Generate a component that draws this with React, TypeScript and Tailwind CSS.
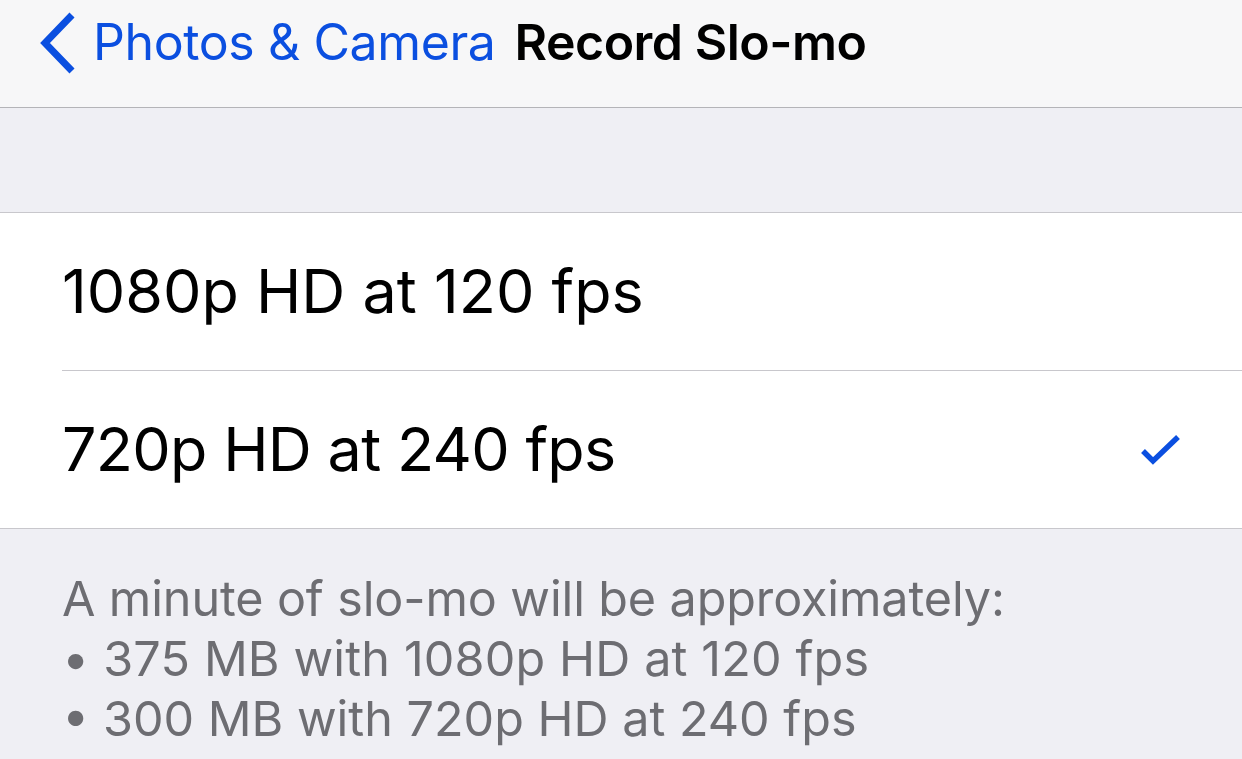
import React from "react";

export default function App() {
  const font = { fontFamily: "Inter, 'Noto Sans', sans-serif" };
  return (
    <div className="w-[1242px] h-[759px] overflow-hidden bg-[#efeff4] flex flex-col" style={font}>
      <div className="h-[108px] bg-[#f7f7f8] border-b border-[#b4b4b8] flex items-start pt-[10px] shrink-0">
        <svg className="ml-[36px] mt-[1px]" width="42" height="64" viewBox="0 0 42 64">
          <path d="M36 4 L9 32 L36 60" fill="none" stroke="#0b4fe0" strokeWidth="7" />
        </svg>
        <span className="ml-[15px] text-[50px] leading-[64px] text-[#0b4fe0] tracking-[-0.4px]">Photos &amp; Camera</span>
        <span className="ml-[19px] text-[50px] leading-[64px] font-semibold text-black tracking-[-0.5px]">Record Slo-mo</span>
      </div>
      <div className="h-[104px] shrink-0" />
      <div className="bg-white border-t border-b border-[#c8c7cc] shrink-0">
        <div className="h-[157px] flex items-center pl-[62px]">
          <span className="text-[61px] text-black tracking-[0px]">1080p HD at 120 fps</span>
        </div>
        <div className="ml-[62px] h-px bg-[#c8c7cc]" />
        <div className="h-[157px] flex items-center pl-[62px] pr-[60px] justify-between">
          <span className="text-[61px] text-black tracking-[-0.7px]">720p HD at 240 fps</span>
          <svg width="42" height="34" viewBox="0 0 42 34" className="mt-[2px]">
            <path d="M3 17 L13 27 L38 3" fill="none" stroke="#0b4fe0" strokeWidth="5.5" />
          </svg>
        </div>
      </div>
      <div className="pl-[62px] pt-[40px] text-[48.5px] leading-[60px] text-[#6d6d72] tracking-[0px]">
        <div className="tracking-[-0.12px]">A minute of slo-mo will be approximately:</div>
        <div className="tracking-[0.15px]">• 375 MB with 1080p HD at 120 fps</div>
        <div>• 300 MB with 720p HD at 240 fps</div>
      </div>
    </div>
  );
}
